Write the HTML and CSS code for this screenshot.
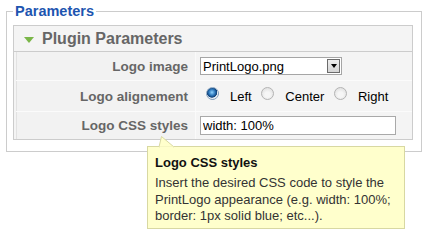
FILE: index.html
```html
<!DOCTYPE html>
<html>
<head>
<meta charset="utf-8">
<link rel="stylesheet" href="styles.css">
</head>
<body>
<fieldset class="params">
  <legend>Parameters</legend>
  <div class="panel">
    <h3 class="panel-head"><span class="tri"></span>Plugin Parameters</h3>
    <table class="ptable">
      <tr class="row r1">
        <td class="lbl">Logo image</td>
        <td class="val">
          <div class="select"><span class="sel-text">PrintLogo.png</span><span class="sel-btn"><span class="arrow"></span></span></div>
        </td>
      </tr>
      <tr class="row r2">
        <td class="lbl">Logo alignement</td>
        <td class="val">
          <label class="radio"><input type="radio" name="al" checked><span>Left</span></label>
          <label class="radio"><input type="radio" name="al"><span>Center</span></label>
          <label class="radio"><input type="radio" name="al"><span>Right</span></label>
        </td>
      </tr>
      <tr class="row r3">
        <td class="lbl">Logo CSS styles</td>
        <td class="val"><input class="text" type="text" value="width: 100%"></td>
      </tr>
    </table>
  </div>
</fieldset>
<div class="tooltip">
  <svg class="tip-arrow" width="18" height="12" viewBox="0 0 18 12"><polygon points="3.5,0.5 1,11 16,11" fill="#ffffcc" stroke="#d8d8a2" stroke-width="1"/><rect x="1.5" y="10.5" width="14" height="2" fill="#ffffcc"/></svg>
  <div class="tip-title">Logo CSS styles</div>
  <div class="tip-body">Insert the desired CSS code to style the PrintLogo appearance (e.g. width: 100%; border: 1px solid blue; etc...).</div>
</div>
</body>
</html>
```
FILE: styles.css
```css
body {
  margin: 0;
  width: 430px;
  height: 240px;
  overflow: hidden;
  position: relative;
  background: #fff;
  font-family: "Liberation Sans", Arial, sans-serif;
}
.params {
  margin: 3px 0 0 6px;
  width: 416px;
  box-sizing: border-box;
  border: 1px solid #cccccc;
  padding: 0 7px 11px 6px;
  min-inline-size: 0;
}
.params legend {
  font-size: 14.5px;
  font-weight: bold;
  color: #1d55b0;
  line-height: 17px;
  padding: 0 2px;
}
.panel {
  margin-top: 5px;
  width: 400px;
  box-sizing: border-box;
  border: 1px solid #cccccc;
  background: #f4f4f4;
}
.panel-head {
  margin: 0;
  height: 25px;
  line-height: 25px;
  border-bottom: 1px solid #cccccc;
  font-size: 16px;
  font-weight: bold;
  color: #666666;
  padding-left: 10px;
  display: flex;
  align-items: center;
}
.tri {
  width: 0;
  height: 0;
  border-left: 5px solid transparent;
  border-right: 5px solid transparent;
  border-top: 6px solid #7ab648;
  margin-right: 8px;
  margin-top: 2px;
}
.ptable {
  border-collapse: collapse;
  width: calc(100% - 2px);
  margin-left: 2px;
  border-left: 1px solid #e2e2e2;
}
.row td {
  padding: 0;
  border-bottom: 1px solid #fbfbfb;
}
.row.r3 td { border-bottom: none; }
.r1 td { height: 28px; }
.r2 td { height: 30px; }
.r3 td { height: 27px; }
.lbl {
  width: 171px;
  text-align: right;
  padding-right: 7px !important;
  font-size: 13.5px;
  font-weight: bold;
  color: #666666;
  border-right: 1px solid #fafafa;
  background: #f2f2f2;
  white-space: nowrap;
}
.val {
  padding-left: 4px !important;
  font-size: 13px;
  color: #000;
}
.select {
  width: 142px;
  height: 18px;
  box-sizing: border-box;
  border: 1px solid #a5a5a5;
  background: #fff;
  display: flex;
  align-items: center;
  justify-content: space-between;
}
.sel-text {
  padding-left: 2px;
  font-size: 13px;
}
.sel-btn {
  width: 13px;
  height: 14px;
  box-sizing: border-box;
  margin-right: 1px;
  border: 1px solid #6b6b6b;
  background: linear-gradient(#eeeeee, #d4d4d4);
  display: flex;
  align-items: center;
  justify-content: center;
}
.arrow {
  width: 0;
  height: 0;
  border-left: 3.5px solid transparent;
  border-right: 3.5px solid transparent;
  border-top: 4px solid #000;
}
.radio {
  display: inline-flex;
  align-items: center;
  margin-right: 0;
}
.radio input {
  appearance: none;
  -webkit-appearance: none;
  width: 13px;
  height: 13px;
  margin: 0 5px 0 6px;
  border-radius: 50%;
  border: 1px solid #b4b4b4;
  background: radial-gradient(circle at 50% 60%, #f6f6f6 30%, #d8d8d8 100%);
  box-sizing: border-box;
  position: relative;
  top: -2px;
}
.radio input:checked {
  border-color: #8aa4bf;
  background: radial-gradient(circle at 45% 40%, #8fd3ff 0, #2a74b8 35%, #0e3e75 55%, #e8eef4 62%, #dfe6ee 100%);
}
.radio span {
  margin-left: 6px;
  margin-right: 0;
  position: relative;
  top: 1px;
}
.text {
  width: 196px;
  height: 19px;
  box-sizing: border-box;
  border: 1px solid #a9a9a9;
  padding: 0 2px;
  margin: 0;
  font-family: "Liberation Sans", Arial, sans-serif;
  font-size: 13px;
  color: #000;
  background: #fff;
  display: block;
}
.tooltip {
  position: absolute;
  left: 147px;
  top: 146px;
  width: 258px;
  height: 83px;
  box-sizing: border-box;
  background: #ffffcc;
  border: 1px solid #d8d8a2;
  padding: 8px 7px 0 7px;
}
.tip-arrow {
  position: absolute;
  left: 10px;
  top: -11px;
}
.tip-title {
  font-size: 13px;
  font-weight: bold;
  color: #111;
  line-height: 15px;
  margin-bottom: 5px;
}
.tip-body {
  font-size: 13px;
  line-height: 16.5px;
  color: #333;
}
```
